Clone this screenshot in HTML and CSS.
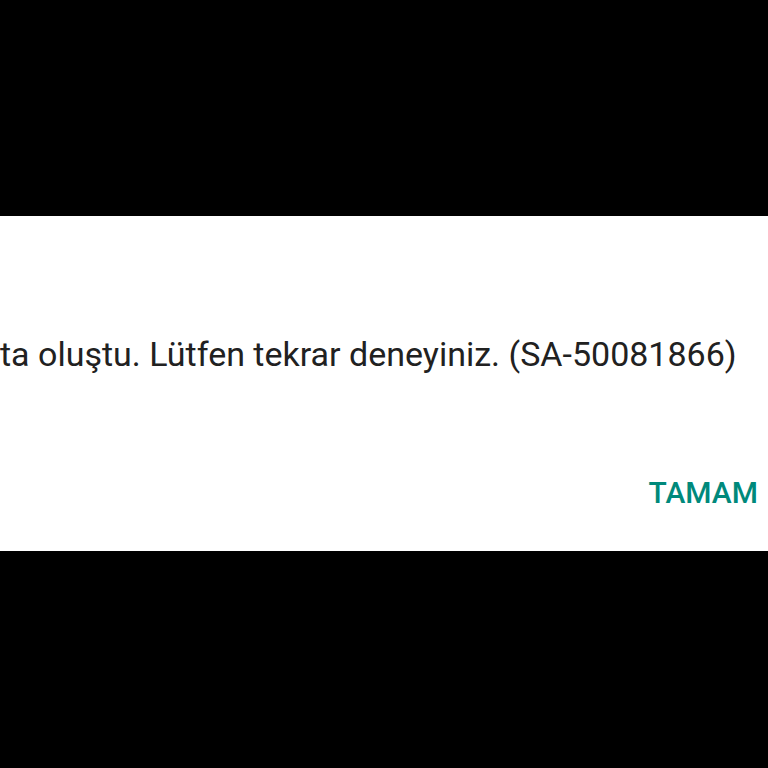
FILE: index.html
```html
<!DOCTYPE html>
<html lang="tr">
<head>
<meta charset="utf-8">
<link rel="stylesheet" href="styles.css">
</head>
<body>
<div class="screen">
  <div class="dialog">
    <p class="message">ta oluştu. Lütfen tekrar deneyiniz. (SA-50081866)</p>
    <div class="actions">
      <span class="button">TAMAM</span>
    </div>
  </div>
</div>
</body>
</html>
```

FILE: styles.css
```css
html, body {
  margin: 0;
  padding: 0;
  background: #000;
}
.screen {
  width: 768px;
  height: 768px;
  overflow: hidden;
  padding-top: 216px;
  box-sizing: border-box;
}
.dialog {
  background: #fff;
  height: 335px;
  display: flex;
  flex-direction: column;
  overflow: hidden;
}
.message {
  margin: 0;
  padding-top: 118px;
  padding-left: 0;
  font-family: Roboto, "Noto Sans", sans-serif;
  font-size: 34px;
  line-height: 40px;
  color: #212121;
  white-space: nowrap;
}
.actions {
  display: flex;
  justify-content: flex-end;
  padding-right: 10px;
  padding-top: 101px;
}
.button {
  font-family: Roboto, "Noto Sans", sans-serif;
  font-weight: 500;
  font-size: 30px;
  line-height: 36px;
  color: #00897b;
}
```
